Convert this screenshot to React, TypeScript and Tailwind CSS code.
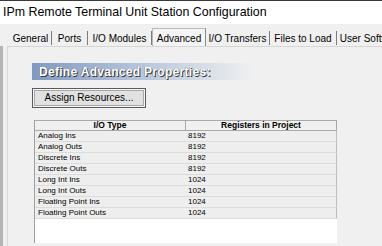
const tabs = [
  { label: "General", w: "w-[42px]" },
  { label: "Ports", w: "w-[36px]" },
  { label: "I/O Modules", w: "w-[64px]" },
  { label: "Advanced", w: "w-[54px]", active: true },
  { label: "I/O Transfers", w: "w-[64px]" },
  { label: "Files to Load", w: "w-[67px]" },
  { label: "User Software", w: "w-[70px]" },
]

const rows = [
  ["Analog Ins", "8192"],
  ["Analog Outs", "8192"],
  ["Discrete Ins", "8192"],
  ["Discrete Outs", "8192"],
  ["Long Int Ins", "1024"],
  ["Long Int Outs", "1024"],
  ["Floating Point Ins", "1024"],
  ["Floating Point Outs", "1024"],
]

export default function App() {
  return (
    <div className="relative h-[246px] w-[382px] overflow-hidden bg-[#f0f0f0] font-['Liberation_Sans',Arial,sans-serif] text-black">
      {/* title bar */}
      <div className="flex h-[24px] items-center border-t border-[#3a3a3a] bg-white pl-[3px] text-[12.4px] leading-none">
        IPm Remote Terminal Unit Station Configuration
      </div>

      {/* tab strip, last tab runs off the window edge */}
      <div className="flex h-[22px] items-end pl-[10px] text-[10px] leading-none">
        {tabs.map((t) =>
          t.active ? (
            <div
              key={t.label}
              className={`${t.w} flex h-[18px] shrink-0 items-start justify-center border-x border-t border-[#b8b8b8] border-r-[#8a8a8a] bg-[#f4f4f4] pt-[5px]`}
            >
              {t.label}
            </div>
          ) : (
            <div
              key={t.label}
              className={`${t.w} mb-[1px] flex h-[14px] shrink-0 items-center justify-center whitespace-nowrap border-r border-[#7c7c7c] pt-[1px]`}
            >
              {t.label}
            </div>
          )
        )}
      </div>

      {/* left window edge */}
      <div className="absolute left-0 top-[46px] h-[200px] w-[3px] bg-[#b4b4b4]" />

      {/* tab page */}
      <div className="ml-[7px] h-[200px] border-l border-t border-[#d6d6d6] pl-[24px] pt-[16px]">
        <div className="flex h-[17px] w-[220px] items-center bg-gradient-to-r from-[#8199c2] via-[#b7c6dc] to-[#f0f0f0] pl-[7px] text-[12px] font-bold leading-none tracking-[0.3px] text-white [text-shadow:1px_1px_0_#3a3a3a,-0.5px_-0.5px_0_#6a6a6a]">
          Define Advanced Properties:
        </div>

        <button
          type="button"
          className="mt-[8px] flex h-[20px] w-[114px] items-center justify-center border border-[#5a5a5a] bg-[#e1e1e1] text-[10px] leading-none shadow-[inset_0_0_0_1px_#f7f7f7,inset_0_0_0_2px_#a8a8a8]"
        >
          Assign Resources...
        </button>

        <div className="ml-[2px] mt-[12px] flex h-[123px] w-[303px] flex-col border-l border-[#a0a0a0] bg-white">
          <div className="flex h-[11px] shrink-0 border-b border-t border-[#a8a8a8] border-r bg-[#f0f0f0] text-[8.5px] font-bold leading-none">
            <div className="flex w-[151px] items-center justify-center border-r border-[#a8a8a8]">
              I/O Type
            </div>
            <div className="flex flex-1 items-center justify-center">
              Registers in Project
            </div>
          </div>
          {rows.map(([type, regs]) => (
            <div
              key={type}
              className="flex h-[11px] shrink-0 items-center border-b border-r border-b-[#dcdcdc] border-r-[#bdbdbd] bg-[#eeeeee] text-[8px] leading-none"
            >
              <div className="w-[151px] pl-[3px]">{type}</div>
              <div className="pl-[2px]">{regs}</div>
            </div>
          ))}
        </div>
      </div>
    </div>
  )
}
